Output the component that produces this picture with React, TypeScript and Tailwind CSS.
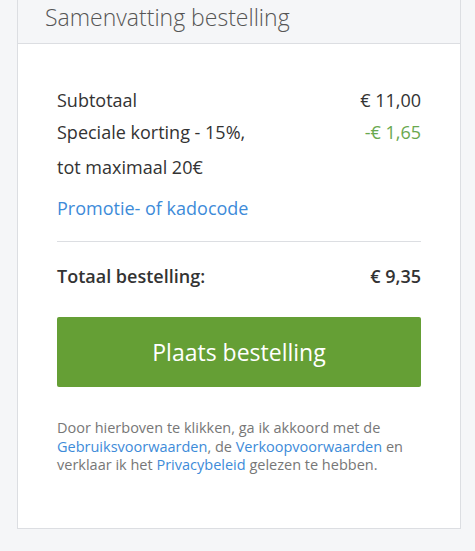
import React from 'react';

export default function App() {
  return (
    <div className="min-h-screen w-full bg-[#f5f6f8] font-['Open_Sans',sans-serif]">
      <div className="ml-[17px] w-[444px] border-x border-b border-[#dcdee2] bg-white">
        {/* Header */}
        <div className="h-[44px] border-b border-[#dcdee2] bg-[#f5f6f8] pl-[27px] pt-[2px]">
          <h2 className="text-[23px] font-light leading-[30px] text-[#555]">Samenvatting bestelling</h2>
        </div>
        {/* Body */}
        <div className="px-[39px] pt-[44px] pb-[53px] text-[18px] text-[#333]">
          <div className="flex justify-between leading-[24px]">
            <span>Subtotaal</span>
            <span>€ 11,00</span>
          </div>
          <div className="mt-[3px] flex justify-between leading-[35px]">
            <span>
              Speciale korting - 15%,
              <br />
              tot maximaal 20€
            </span>
            <span className="text-[#6aa84f]">-€ 1,65</span>
          </div>
          <a href="#" className="mt-[11px] block leading-[24px] text-[#3d8bd9]">
            Promotie- of kadocode
          </a>
          <div className="mt-[21px] h-px bg-[#dcdee2]" />
          <div className="mt-[22px] flex justify-between font-semibold leading-[24px]">
            <span>Totaal bestelling:</span>
            <span>€ 9,35</span>
          </div>
          <button className="mt-[29px] flex h-[70px] w-full items-center justify-center rounded-[2px] bg-[#659f35] text-[23px] text-white">
            Plaats bestelling
          </button>
          <p className="mt-[32px] text-[14.5px] leading-[18.5px] text-[#777]">
            Door hierboven te klikken, ga ik akkoord met de{' '}
            <a href="#" className="text-[#3d8bd9]">Gebruiksvoorwaarden</a>, de{' '}
            <a href="#" className="text-[#3d8bd9]">Verkoopvoorwaarden</a> en verklaar ik het{' '}
            <a href="#" className="text-[#3d8bd9]">Privacybeleid</a> gelezen te hebben.
          </p>
        </div>
      </div>
    </div>
  );
}
